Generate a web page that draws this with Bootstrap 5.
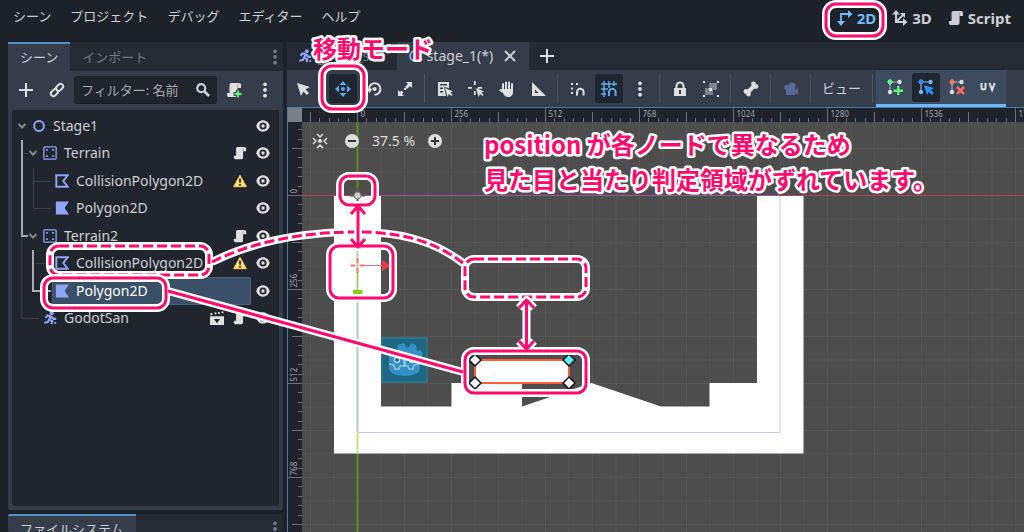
<!DOCTYPE html>
<html lang="ja">
<head>
<meta charset="utf-8">
<meta name="viewport" content="width=device-width, initial-scale=1">
<title>Godot – stage_1</title>
<link rel="stylesheet" href="https://cdn.jsdelivr.net/npm/bootstrap@5.3.0/dist/css/bootstrap.min.css">
<style>
:root{--ground:#1d2229;--bar:#252b34;--panel:#363d4a;--well:#21262e;--ink:#cdcfd2;--accent:#70bafa;--edge:#4a7cab;--hot:#ff0a6c}
body{background:var(--ground);color:var(--ink);font:13px/20px "Noto Sans","Noto Sans CJK JP",sans-serif}
button{background:none;border:0;padding:0;color:inherit;font:inherit}
svg{display:block;flex:none}
.ico{width:16px;height:16px;fill:currentColor}
.ico-s{width:14px;height:14px;fill:currentColor}
.topbar{height:42px;padding:0 13px}
.menu{gap:19px;margin-top:-10px;line-height:20px}
.modes{gap:16px;font-size:15px;font-weight:700;margin-top:-6px}
.modes button{gap:4px}
.on{color:var(--accent)}
.faint{color:#74787f}
.work{gap:4px;padding-left:8px}
.docks{width:275px;gap:4px}
.dock{background:var(--panel);border-radius:2px}
.tabrow{background:var(--bar);height:29px;flex:none}
.tab-b{padding:0 12px 2px;height:29px;color:#74787f;border-top:2px solid transparent}
.tab-on{background:var(--panel);border-top-color:#5591c6;color:var(--ink)}
.docktools{height:38px;padding:0 4px;gap:3px}
.tool{width:28px;height:29px;border-radius:3px;display:flex;align-items:center;justify-content:center;flex:none;color:#dedfe0}
.tool.sel{background:#20262f;color:#5fa9ea}
.find{background:#20252d;border-radius:3px;height:28px;padding:0 6px 0 7px;border-bottom:1px solid #191d24}
.find input{background:none;border:0;outline:0;color:var(--ink);padding:0;width:100%;min-width:0}
.find input::placeholder{color:#a5a8ac;opacity:1}
.tree{background:var(--well);margin:1px 4px 4px;border-radius:3px;padding-top:2px;font-size:14px}
.rows{height:220px}
.trow{padding:0 9px 0 3px}
.trow.l1{padding-left:14px}
.trow.l2{padding-left:26px}
.slot{width:14px;color:#85888d}
.lab{padding:0 4px 0 3px;gap:7px;border-radius:2px;margin-right:5px}
.lab.sel{background:#3a5068;box-shadow:inset 0 0 0 1px #4a637e;color:#fff}
.marks{gap:9px;color:#e0e0e0}
.blue{color:#8da5f3}
.fs{height:18px;flex:none;overflow:hidden}
.etabs{height:28px}
.etab{padding:0 11px 2px;height:28px;border-top:2px solid transparent;gap:5px;font-size:14px}
.etools{background:var(--panel);height:37px;padding-left:2px;gap:3px}
.sep{width:1px;height:29px;background:#4b525f;margin:0 3px 0 2px}
.viewmenu{padding:0 6px 2px 5px}
.polygroup{background:#3c4c5e;border-bottom:3px solid var(--accent);height:37px;padding:0 4px 0 5px;gap:3px}
.view{min-height:0;border:solid var(--edge);border-width:1px 0 0 1px;background:#4d4d4d}
.zoombar{top:23px;left:24px;gap:13px;font-size:14px;line-height:20px;color:#dedede}
.rul{font:8px "Noto Sans",sans-serif;fill:#a3a6ab}
.notes{z-index:5;pointer-events:none}
.note{font:700 24px "Noto Sans CJK JP",sans-serif;fill:var(--hot);stroke:#fff;stroke-width:5px;stroke-linejoin:round;paint-order:stroke}
.under{stroke:#fff;stroke-width:8px;fill:none}
.over{stroke:var(--hot);stroke-width:3px;fill:none}
.under,.over{stroke-linecap:butt;stroke-linejoin:round}
.dash{stroke-dasharray:10 4}
</style>
</head>
<body class="vh-100 overflow-hidden d-flex flex-column position-relative">
<svg class="d-none">
 <symbol id="dots" viewBox="0 0 16 16"><circle cx="8" cy="2.3" r="1.9"/><circle cx="8" cy="8" r="1.9"/><circle cx="8" cy="13.7" r="1.9"/></symbol>
 <symbol id="plus" viewBox="0 0 16 16"><path d="M7 1h2v6h6v2H9v6H7V9H1V7h6z"/></symbol>
 <symbol id="link" viewBox="0 0 16 16"><g fill="none" stroke="currentColor" stroke-width="2"><rect x="-3.9" y="-2.6" width="7.8" height="5.2" rx="2.6" transform="translate(10.6 5.4) rotate(-45)"/><rect x="-3.9" y="-2.6" width="7.8" height="5.2" rx="2.6" transform="translate(5.4 10.6) rotate(-45)"/></g></symbol>
 <symbol id="search" viewBox="0 0 16 16"><circle cx="6.2" cy="6.2" r="4" fill="none" stroke="currentColor" stroke-width="2.2"/><path d="M9 9l5 5" stroke="currentColor" stroke-width="2.6"/></symbol>
 <symbol id="script" viewBox="0 0 16 16"><path d="M5.500 1C4 1 3.500 2 3.500 3v8H1v2C1 14.500 2 15 3 15h6.500c1.300 0 2-1 2-2V6H15V3c0-1.200-.8-2-2-2z"/><path d="M11.500 6V3.200C11.500 2.500 12 2 12.500 2" stroke="#9b9c9e" fill="none" stroke-width=".8"/></symbol>
 <symbol id="eye" viewBox="0 0 16 16"><path fill-rule="evenodd" d="M8 1.500C4.500 1.500 1.300 4 .3 8c1 4 4.200 6.500 7.700 6.500S14.700 12 15.700 8C14.700 4 11.500 1.500 8 1.500zM8 4a4 4 0 110 8 4 4 0 010-8z"/><circle cx="8" cy="8" r="2"/></symbol>
 <symbol id="warn" viewBox="0 0 16 16"><path fill="#ffdd65" stroke="#ffdd65" stroke-linejoin="round" d="M8 1.500L15.300 14.500H.7z"/><path fill="#21262e" d="M7 5h2v5H7zM7 11.300h2v2H7z"/></symbol>
 <symbol id="chev" viewBox="0 0 14 14"><path d="M3.500 5l3.500 3.500L10.500 5" fill="none" stroke="currentColor" stroke-width="2"/></symbol>
 <symbol id="node" viewBox="0 0 16 16"><circle cx="8" cy="8" r="5.600" fill="none" stroke="currentColor" stroke-width="2.300"/></symbol>
 <symbol id="body" viewBox="0 0 16 16"><rect x="1" y="1" width="14" height="14" rx="1" fill="none" stroke="currentColor" stroke-width="1.500"/><path d="M3.500 3.500h2v2h-2zM10.500 3.500h2v2h-2zM3.500 10.500h2v2h-2zM10.500 10.500h2v2h-2z"/></symbol>
 <symbol id="cpoly" viewBox="0 0 16 16"><path d="M1.500 1.500h13L9.500 8l5 6.500h-13z" fill="none" stroke="currentColor" stroke-width="2.300"/></symbol>
 <symbol id="poly" viewBox="0 0 16 16"><path d="M1 .5h15L11 8l5 7.500H1z"/></symbol>
 <symbol id="run" viewBox="0 0 16 16"><circle cx="10" cy="2.500" r="2.300"/><path d="M9 6L7 10l3.500 1.500L10 15M7.500 9L5.500 12.500 1.500 13.500M9 6L5 5 3 8M9 6l3 3h3M13 13.500h2" fill="none" stroke="currentColor" stroke-width="2.500"/></symbol>
 <symbol id="clap" viewBox="0 0 16 16"><path d="M0 3l2-1 1 2-2 1zM5 2l2-.5.700 2-2 .5zM9 1.500l2-.5.500 2-2 .5zM13 .5l2-.2.500 2-2 .4z"/><path fill-rule="evenodd" d="M0 6h16v10H0zM4.500 9l3.500 5 3.500-5z"/></symbol>
 <symbol id="x" viewBox="0 0 16 16"><path d="M3 3l10 10M13 3L3 13" stroke="currentColor" stroke-width="2"/></symbol>
 <symbol id="arrow" viewBox="0 0 16 16"><path d="M2 2l4 13 2.500-4.500L12 14l2-2-3.500-3.500L15 6z"/></symbol>
 <symbol id="move" viewBox="0 0 16 16"><circle cx="8" cy="8" r="2"/><path d="M8 0l3.500 4h-7zM8 16l3.500-4h-7zM0 8l4-3.500v7zM16 8l-4-3.500v7z"/></symbol>
 <symbol id="rotate" viewBox="0 0 16 16"><path d="M3 8a5.700 5.700 0 1 1 5.500 5.700" fill="none" stroke="currentColor" stroke-width="2"/><path d="M0 7.500h7L3.500 12z"/><circle cx="8.700" cy="8" r="2"/></symbol>
 <symbol id="scale" viewBox="0 0 16 16"><path d="M9 1h6v6l-2-2-3 3-2-2 3-3zM1 9v6h6l-2-2 1.500-1.500-2-2L3 11z"/><path d="M7 7h2v2H7z"/></symbol>
 <symbol id="list" viewBox="0 0 16 16"><path fill-rule="evenodd" d="M1 1h11v6L7 6l2 9H1zM3 3v1.500h7V3zM3 6.500V8h3V6.500zM3 10v1.500h3V10z"/><path d="M8 7l2.500 9 1.500-3 2.500 2 1-1-2-2.500 2.500-1z"/></symbol>
 <symbol id="pivot" viewBox="0 0 16 16"><path d="M6 0h1.700v4H6zM0 6h4v1.700H0zM10 6h4v1.700h-4zM6 10h1.700v4H6z"/><path d="M8 7l2.500 9 1.500-3 2.500 2 1-1-2-2.500 2.500-1z"/></symbol>
 <symbol id="hand" viewBox="0 0 16 16"><path d="M4 3v6M7 1.500v8M10 1.500v8M13 3v7" stroke="currentColor" stroke-width="2" stroke-linecap="round"/><path d="M3 8h11v3c0 3-2 5-4.500 5C6 16 5 14 4 12L0 9.500 1.500 8z"/></symbol>
 <symbol id="rule" viewBox="0 0 16 16"><path fill-rule="evenodd" d="M2 1v14h14zM5 8.500v3.500h3.500z"/></symbol>
 <symbol id="snap" viewBox="0 0 16 16"><path d="M1 2h2v2H1zM6 2h2v2H6zM1 6.500h2v2H1zM1 11h2v2H1z"/><path d="M7 14.500v-3.500a3.300 3.300 0 0 1 6.600 0v3.500" fill="none" stroke="currentColor" stroke-width="2"/></symbol>
 <symbol id="grid" viewBox="0 0 16 16"><path d="M3 0v16M8 0v7M13 0v5M0 3h16M0 8h7M0 13h5" stroke="currentColor" stroke-width="1.500"/><path d="M8 15v-4a3.300 3.300 0 0 1 6.600 0v4" fill="none" stroke="currentColor" stroke-width="2"/></symbol>
 <symbol id="lock" viewBox="0 0 16 16"><path fill-rule="evenodd" d="M2 7h12v8H2zM7 9v4h2V9z"/><path d="M4.500 7V5a3.500 3.500 0 0 1 7 0v2" fill="none" stroke="currentColor" stroke-width="2"/></symbol>
 <symbol id="group" viewBox="0 0 16 16"><path fill="#7f838b" d="M6 2h8v7h-4v5H2V7h4z"/><path d="M0 0h2v2H0zM14 0h2v2h-2zM0 14h2v2H0zM14 14h2v2h-2zM6 7h3v3H6z"/></symbol>
 <symbol id="bone" viewBox="0 0 16 16"><path d="M4 12l8-8" stroke="currentColor" stroke-width="4"/><circle cx="10.500" cy="3" r="2.400"/><circle cx="13" cy="5.500" r="2.400"/><circle cx="3" cy="10.500" r="2.400"/><circle cx="5.500" cy="13" r="2.400"/></symbol>
 <symbol id="cam" viewBox="0 0 16 16"><circle cx="9" cy="5" r="3.500"/><circle cx="4" cy="6.500" r="2.800"/><path d="M3 7h9v7H3zM12 9l3-2v7l-3-2z"/></symbol>
 <symbol id="pts" viewBox="0 0 16 16"><path d="M3 3h9M3 3v10" stroke="#a9adb3" stroke-width="1.200"/><circle cx="3" cy="3" r="2.400"/><circle cx="12.500" cy="3" r="2.200"/><circle cx="3" cy="13" r="2.200"/></symbol>
 <symbol id="centre" viewBox="0 0 16 16"><circle cx="8" cy="8" r="2"/><path d="M5 1l3 3 3-3M5 15l3-3 3 3M1 5l3 3-3 3M15 5l-3 3 3 3" fill="none" stroke="currentColor" stroke-width="1.500"/></symbol>
</svg>

<header class="topbar d-flex align-items-center justify-content-between">
 <nav class="menu d-flex" aria-label="メニュー"><button>シーン</button><button>プロジェクト</button><button>デバッグ</button><button>エディター</button><button>ヘルプ</button></nav>
 <div class="modes d-flex">
  <button class="on d-flex align-items-center"><svg class="ico" viewBox="0 0 16 16"><path d="M4 13V4h9" fill="none" stroke="currentColor" stroke-width="1.800"/><path d="M11 0l4.500 4L11 8zM0 11h8l-4 5z"/></svg>2D</button>
  <button class="d-flex align-items-center"><svg class="ico" viewBox="0 0 16 16"><path d="M4 3v9h8M4 12l7-7" fill="none" stroke="currentColor" stroke-width="2"/><path d="M0 4.500h8L4 0zM11 8l4.500 4L11 16zM8 3h5v5z"/></svg>3D</button>
  <button class="d-flex align-items-center"><svg class="ico"><use href="#script"/></svg>Script</button>
 </div>
</header>

<main class="work d-flex flex-fill overflow-hidden">
 <aside class="docks d-flex flex-column flex-shrink-0">
  <section class="dock d-flex flex-column flex-fill">
   <div class="tabrow d-flex align-items-center"><button class="tab-b tab-on">シーン</button><button class="tab-b">インポート</button><button class="ms-auto faint" aria-label="ドックメニュー"><svg class="ico"><use href="#dots"/></svg></button></div>
   <div class="docktools d-flex align-items-center">
    <button class="tool" aria-label="追加"><svg class="ico"><use href="#plus"/></svg></button>
    <button class="tool" aria-label="インスタンス化"><svg class="ico"><use href="#link"/></svg></button>
    <label class="find d-flex align-items-center flex-fill overflow-hidden"><input type="text" placeholder="フィルター: 名前" aria-label="フィルター"><svg class="ico"><use href="#search"/></svg></label>
    <button class="tool" aria-label="スクリプト追加"><svg class="ico" viewBox="0 0 16 16"><use href="#script"/><path d="M10.500 8h3v2.500H16v3h-2.500V16h-3v-2.500H8v-3h2.500z" fill="#5ff576" stroke="#363d4a"/></svg></button>
    <button class="tool" aria-label="その他"><svg class="ico"><use href="#dots"/></svg></button>
   </div>
   <div class="tree flex-fill position-relative">
    <svg class="position-absolute top-0 start-0" width="60" height="220" fill="none"><g transform="translate(-12 -110)"><path stroke="#3a4049" d="M21.500 236v82.500H39M24 153.500h4M33.500 168v40.500H51M33.500 181.500H51M36 263.500H51"/><path stroke="#a9abae" stroke-width="2" d="M22 140v96h6M33 250v41h18"/></g></svg>
    <div class="rows d-flex flex-column position-relative">
     <div class="trow d-flex flex-fill"><div class="slot d-flex align-items-center"><svg class="ico-s"><use href="#chev"/></svg></div><div class="lab d-flex align-items-center flex-fill"><svg class="ico-s blue"><use href="#node"/></svg>Stage1</div><div class="marks d-flex align-items-center"><svg class="ico-s"><use href="#eye"/></svg></div></div>
     <div class="trow l1 d-flex flex-fill"><div class="slot d-flex align-items-center"><svg class="ico-s"><use href="#chev"/></svg></div><div class="lab d-flex align-items-center flex-fill"><svg class="ico-s blue"><use href="#body"/></svg>Terrain<span class="marks ms-auto"><svg class="ico-s"><use href="#script"/></svg></span></div><div class="marks d-flex align-items-center"><svg class="ico-s"><use href="#eye"/></svg></div></div>
     <div class="trow l2 d-flex flex-fill"><div class="slot"></div><div class="lab d-flex align-items-center flex-fill"><svg class="ico-s blue"><use href="#cpoly"/></svg>CollisionPolygon2D<span class="marks ms-auto"><svg class="ico-s"><use href="#warn"/></svg></span></div><div class="marks d-flex align-items-center"><svg class="ico-s"><use href="#eye"/></svg></div></div>
     <div class="trow l2 d-flex flex-fill"><div class="slot"></div><div class="lab d-flex align-items-center flex-fill"><svg class="ico-s blue"><use href="#poly"/></svg>Polygon2D</div><div class="marks d-flex align-items-center"><svg class="ico-s"><use href="#eye"/></svg></div></div>
     <div class="trow l1 d-flex flex-fill"><div class="slot d-flex align-items-center"><svg class="ico-s"><use href="#chev"/></svg></div><div class="lab d-flex align-items-center flex-fill"><svg class="ico-s blue"><use href="#body"/></svg>Terrain2<span class="marks ms-auto"><svg class="ico-s"><use href="#script"/></svg></span></div><div class="marks d-flex align-items-center"><svg class="ico-s"><use href="#eye"/></svg></div></div>
     <div class="trow l2 d-flex flex-fill"><div class="slot"></div><div class="lab d-flex align-items-center flex-fill"><svg class="ico-s blue"><use href="#cpoly"/></svg>CollisionPolygon2D<span class="marks ms-auto"><svg class="ico-s"><use href="#warn"/></svg></span></div><div class="marks d-flex align-items-center"><svg class="ico-s"><use href="#eye"/></svg></div></div>
     <div class="trow l2 d-flex flex-fill"><div class="slot"></div><div class="lab sel d-flex align-items-center flex-fill"><svg class="ico-s blue"><use href="#poly"/></svg>Polygon2D</div><div class="marks d-flex align-items-center"><svg class="ico-s"><use href="#eye"/></svg></div></div>
     <div class="trow l1 d-flex flex-fill"><div class="slot"></div><div class="lab d-flex align-items-center flex-fill"><svg class="ico-s blue"><use href="#run"/></svg>GodotSan<span class="marks ms-auto d-flex"><svg class="ico-s"><use href="#clap"/></svg><svg class="ico-s"><use href="#script"/></svg></span></div><div class="marks d-flex align-items-center"><svg class="ico-s"><use href="#eye"/></svg></div></div>
    </div>
   </div>
  </section>
  <section class="dock fs">
   <div class="tabrow d-flex align-items-center"><button class="tab-b tab-on">ファイルシステム</button><button class="ms-auto faint" aria-label="ドックメニュー"><svg class="ico"><use href="#dots"/></svg></button></div>
  </section>
 </aside>

 <section class="d-flex flex-column flex-fill overflow-hidden">
  <div class="tabrow etabs d-flex align-items-center">
   <button class="etab tab-b d-flex align-items-center"><svg class="ico-s blue"><use href="#run"/></svg>godot_san</button>
   <button class="etab tab-b tab-on d-flex align-items-center"><svg class="ico-s blue"><use href="#node"/></svg>stage_1(*)<svg class="ico ms-1"><use href="#x"/></svg></button>
   <button class="tool ms-1 faint" aria-label="新しいシーン"><svg class="ico"><use href="#plus"/></svg></button>
  </div>
  <div class="etools d-flex align-items-center">
   <button class="tool" aria-label="選択"><svg class="ico"><use href="#arrow"/></svg></button>
   <span class="sep"></span>
   <button class="tool sel" aria-label="移動"><svg class="ico"><use href="#move"/></svg></button>
   <button class="tool" aria-label="回転"><svg class="ico"><use href="#rotate"/></svg></button>
   <button class="tool" aria-label="拡縮"><svg class="ico"><use href="#scale"/></svg></button>
   <span class="sep"></span>
   <button class="tool" aria-label="リスト選択"><svg class="ico"><use href="#list"/></svg></button>
   <button class="tool" aria-label="ピボット"><svg class="ico"><use href="#pivot"/></svg></button>
   <button class="tool" aria-label="パン"><svg class="ico"><use href="#hand"/></svg></button>
   <button class="tool" aria-label="定規"><svg class="ico"><use href="#rule"/></svg></button>
   <span class="sep"></span>
   <button class="tool" aria-label="スマートスナップ"><svg class="ico"><use href="#snap"/></svg></button>
   <button class="tool sel" aria-label="グリッドスナップ"><svg class="ico"><use href="#grid"/></svg></button>
   <button class="tool" aria-label="スナップ設定"><svg class="ico"><use href="#dots"/></svg></button>
   <span class="sep"></span>
   <button class="tool" aria-label="ロック"><svg class="ico"><use href="#lock"/></svg></button>
   <button class="tool" aria-label="グループ化"><svg class="ico"><use href="#group"/></svg></button>
   <span class="sep"></span>
   <button class="tool" aria-label="ボーン"><svg class="ico"><use href="#bone"/></svg></button>
   <span class="sep"></span>
   <button class="tool" aria-label="カメラ"><svg class="ico" color="#59679b"><use href="#cam"/></svg></button>
   <span class="sep"></span>
   <button class="viewmenu">ビュー</button>
   <span class="sep me-0"></span>
   <div class="polygroup d-flex align-items-center">
    <button class="tool" aria-label="頂点を作成"><svg class="ico" viewBox="0 0 16 16"><use href="#pts"/><circle cx="3" cy="3" r="2.400" fill="#5ff576"/><path d="M10 7h2.500v3.500H16V13h-3.500v3H10v-3H6.500v-2.500H10z" fill="#5ff576"/></svg></button>
    <button class="tool sel" aria-label="頂点を編集"><svg class="ico" viewBox="0 0 16 16" color="#70bafa"><use href="#pts"/><circle cx="3" cy="3" r="2.400" fill="#2f8dff"/><path d="M6 6l3 10 2-3 3 3 2-2-3-3 3-2z" fill="#2f8dff"/></svg></button>
    <button class="tool" aria-label="頂点を消去"><svg class="ico" viewBox="0 0 16 16"><use href="#pts"/><circle cx="3" cy="3" r="2.400" fill="#ff6b62"/><path d="M8 8l7 7M15 8l-7 7" stroke="#ff6b62" stroke-width="2.500"/></svg></button>
    <button class="tool" aria-label="UV"><svg class="ico" viewBox="0 0 16 16"><path d="M1.500 4v4.500a2 2 0 0 0 4 0V4M9.500 4l2.600 7L14.700 4" fill="none" stroke="currentColor" stroke-width="2"/></svg></button>
   </div>
  </div>
  <div class="view flex-fill position-relative overflow-hidden">
   <svg width="100%" height="100%" class="position-absolute top-0 start-0">
    <g transform="translate(-288 -108)">
     <g id="gridlines" stroke="#575757"></g>
     <path d="M302 195.500h55M780 195.500h1200" stroke="#b93f4c"/><path d="M357 195.500h423" stroke="#a24fa3"/>
     <path d="M357.500 122v74M357.500 453v800" stroke="#628a25" stroke-width="2"/>
     <rect x="382" y="338" width="45" height="44" fill="#206680" stroke="#1590ad"/>
     <path d="M389 352l4-3 4 2 1-6 6-2 2 4h3l2-4 5 2 1 6 4-1 2 4-3 5v9c0 5-6 8-15 8s-16-3-16-8v-9z" fill="#3290c6"/>
     <path d="M389 364l5 1 1 4h4l1-3h8l1 3h4l1-4 5-1" fill="none" stroke="#8cc3da" stroke-width="1.500"/><circle cx="397" cy="360" r="2.500" fill="#28536e" stroke="#a9d8e8" stroke-width="1.500"/><circle cx="412" cy="360" r="2.500" fill="#28536e" stroke="#a9d8e8" stroke-width="1.500"/><path d="M404.500 359v7" stroke="#a9d8e8" stroke-width="2"/>
     <path fill="#fff" d="M334 196h47v210.500h70.500V383H522v23.500L591.500 383 661 406.500h48.500V383H757V196h46.500v257.500H334z"/>
     <path d="M357.500 432.500h422.500V196" fill="none" stroke="#c5c5f7"/>
     <path d="M357.500 196v236" stroke="#b5ccb8" stroke-width="2"/><path d="M357.500 433v20" stroke="#c3e57e" stroke-width="2"/>
     <path d="M357.500 272v18" stroke="#98cd3f"/><path d="M353 290h9.500v3l-3 3h-3.500l-3-3z" fill="#85d000"/>
     <path d="M350.500 265.500h5M359.500 265.500h5M357.500 258v5M357.500 268v5" stroke="#ff7d66" stroke-width="2"/><path d="M364 265.500h18" stroke="#ef7178"/><path d="M382 260l9 5.500-9 5.500z" fill="#f3374f"/>
     <path d="M357.500 188v14M350 195.500h15" stroke="#555" stroke-width="2"/><circle cx="357.500" cy="195.500" r="3.500" fill="#ccc" stroke="#777"/>
     <path d="M475 360h94v23h-94z" fill="#fff" stroke="#ff5d38" stroke-width="2"/>
     <g fill="#fff" stroke="#111" stroke-width="1.500"><path d="M475 354l6 6-6 6-6-6zM475 377l6 6-6 6-6-6zM569 377l6 6-6 6-6-6z"/><path fill="#5cf4fb" d="M569 354l6 6-6 6-6-6z"/></g>
     <path d="M288 108h2000v14H302v2000h-14z" fill="#1f242c"/><path d="M288 108h14v14h-14z" fill="#7c7f85"/>
     <g id="ticks" stroke="#6c7078"></g><g id="nums" class="rul"></g>
    </g>
   </svg>
   <div class="zoombar position-absolute d-flex align-items-center">
    <button aria-label="中央に戻す"><svg class="ico"><use href="#centre"/></svg></button>
    <button aria-label="ズームアウト" class="ms-1"><svg class="ico-s" viewBox="0 0 14 14"><circle cx="7" cy="7" r="7"/><path d="M3 7h8" stroke="#333" stroke-width="2"/></svg></button>
    <span>37.5 %</span>
    <button aria-label="ズームイン"><svg class="ico-s" viewBox="0 0 14 14"><circle cx="7" cy="7" r="7"/><path d="M3 7h8M7 3v8" stroke="#333" stroke-width="2"/></svg></button>
   </div>
  </div>
 </section>
</main>

<svg class="notes position-absolute top-0 start-0 w-100 h-100">
 <defs>
  <g id="solid"><rect x="826" y="4" width="57" height="32" rx="10"/><rect x="322" y="66" width="42" height="43" rx="10"/><rect x="340" y="176" width="35" height="29" rx="9"/><rect x="330" y="246" width="63" height="52" rx="9"/><rect x="44" y="278" width="122" height="30" rx="9"/><rect x="465" y="351" width="121" height="42" rx="9"/></g>
  <g id="lines"><path d="M168 291L463 372"/><path d="M358 207v39M351 214l7-8 7 8M351 239l7 8 7-8M526.500 301v47M519 308l7.500-8 7.500 8M519 341l7.500 8 7.500-8"/></g>
  <g id="dashed"><rect x="50" y="246" width="159" height="29" rx="9"/><rect x="465" y="259" width="121" height="38" rx="9"/><path d="M212 262C262 237 318 232 357 232S432 239 463 263"/></g>
 </defs>
 <use href="#dashed" class="under"/><use href="#dashed" class="over dash"/>
 <use href="#lines" class="under"/><use href="#solid" class="under"/><use href="#lines" class="over"/><use href="#solid" class="over"/>
 <text class="note" x="313" y="58">移動モード</text>
 <text class="note" x="484" y="154">position が各ノードで異なるため</text>
 <text class="note" x="484" y="189">見た目と当たり判定領域がずれています。</text>
</svg>

<script src="https://cdn.jsdelivr.net/npm/bootstrap@5.3.0/dist/js/bootstrap.bundle.min.js"></script>
<script>
// Grid and rulers: one ruler unit is 256 px at 37.5 %, drawn 94 px wide.
const OX = 357, OY = 195, UNIT = 94;
const extentX = Math.max(innerWidth, 1024), extentY = Math.max(innerHeight, 532);
let grid = '', ticks = '', nums = '';
for (let i = -2; i < 200; i++) {
  const x = OX + i * UNIT / 4 + .5;
  if (x > 302 && x < extentX) grid += `M${x} 122V${extentY}`;
}
for (let i = -3; i < 200; i++) {
  const y = OY + i * UNIT / 4 + .5;
  if (y > 122 && y < extentY) grid += `M302 ${y}H${extentX}`;
}
const size = n => n % 10 === 0 ? 14 : n % 5 === 0 ? 10 : 4;
for (let n = -8; n < 400; n++) {
  const x = Math.round(OX + n * UNIT / 10) + .5, y = Math.round(OY + n * UNIT / 10) + .5;
  if (x > 302 && x < extentX) ticks += `M${x} 122v-${size(n)}`;
  if (y > 122 && y < extentY) ticks += `M302 ${y}h-${size(n)}`;
  if (n % 10 === 0 && n >= 0) {
    const label = n / 10 * 256;
    if (x < extentX) nums += `<text x="${x + 3}" y="117">${label}</text>`;
    if (y < extentY) nums += `<text transform="translate(297 ${y - 2}) rotate(-90)">${label}</text>`;
  }
}
document.getElementById('gridlines').innerHTML = `<path d="${grid}"/>`;
document.getElementById('ticks').innerHTML = `<path d="${ticks}"/>`;
document.getElementById('nums').innerHTML = nums;
</script>
</body>
</html>
